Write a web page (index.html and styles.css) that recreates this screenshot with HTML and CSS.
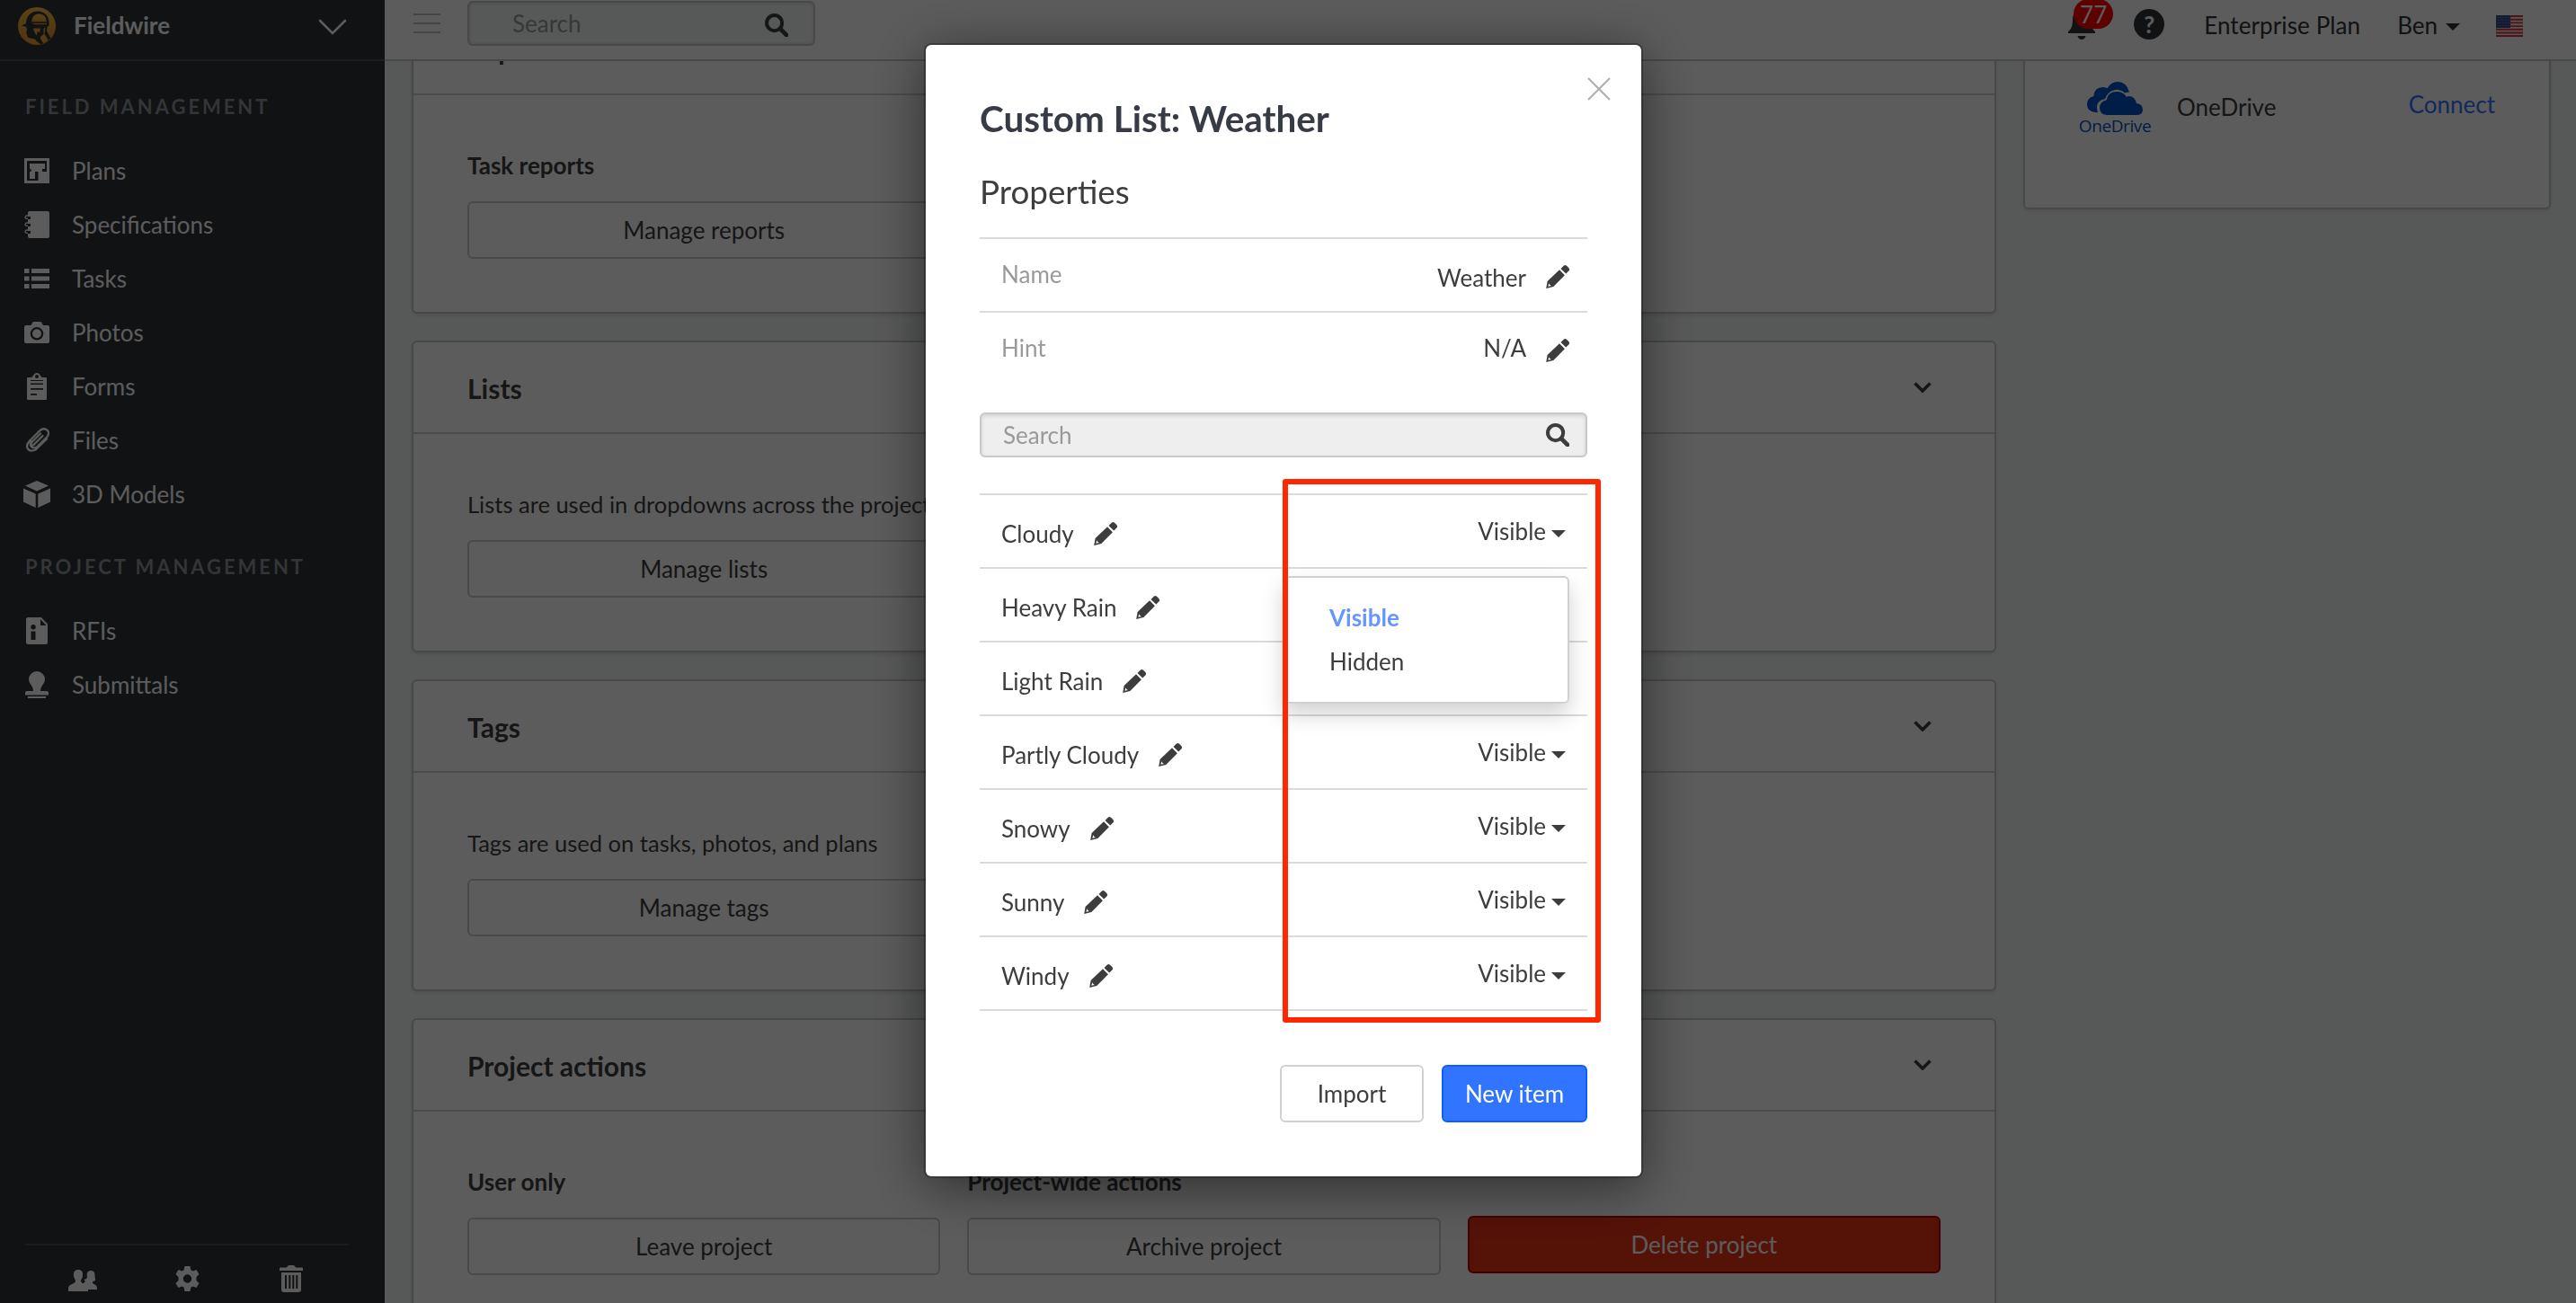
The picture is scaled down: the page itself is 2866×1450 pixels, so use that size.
FILE: index.html
```html
<!DOCTYPE html>
<html lang="en">
<head>
    <meta charset="UTF-8">
    <title>Fieldwire - Project settings</title>
    <link rel="stylesheet" href="styles.css">
</head>
<body>
    <!-- Shared icons -->
    <svg class="sprite" xmlns="http://www.w3.org/2000/svg">
        <symbol id="i-pencil" viewBox="0 0 26 26">
            <path d="M16.500 4l3.200-3.200q1.600-1.500 3.300 0l2.300 2.300q1.500 1.700 0 3.400l-3.100 3.100z"/>
            <path fill-rule="evenodd" d="M15 5.300l5.900 5.900L8.300 24 0.200 26 1.600 18zM3.200 20.300l-.8 3.400 3.500-.8-1.600-.8z"/>
        </symbol>
        <symbol id="i-search" viewBox="0 0 26 26">
            <circle cx="10.600" cy="10.600" r="8.600" fill="none" stroke="currentColor" stroke-width="4"/>
            <path d="M17 17l7 7" stroke="currentColor" stroke-width="4.600" stroke-linecap="round"/>
        </symbol>
        <symbol id="i-chevron" viewBox="0 0 20 12">
            <path d="M1.500 1.500L10 10l8.500-8.500" fill="none" stroke="currentColor" stroke-width="3.600"/>
        </symbol>
    </svg>

    <div class="app">
        <aside class="sidebar">
            <div class="brand">
                <svg class="brand-logo" viewBox="0 0 42 42">
                    <defs>
                        <linearGradient id="gold" x1="0" y1="0" x2="0" y2="1">
                            <stop offset="0" stop-color="#f3bd3c"/>
                            <stop offset="1" stop-color="#e08a2c"/>
                        </linearGradient>
                    </defs>
                    <circle cx="21" cy="21" r="21" fill="url(#gold)"/>
                    <path fill="#2f3238" d="M4 20.500L9 18C9.500 10 14 4.500 22 4.500c7 0 12.500 5 12.500 12.500v3l-2 2.500-.5 4 4.500 8-4 3-4.500-5-3 3 3 4.500-2 1.500-9-6-6.500-1.500-1.500-5 1-4-1-3z"/>
                    <path fill="url(#gold)" d="M15 16.200q.8-8.700 8.500-8.700t8.500 8.700zM15 17.700h17v1.500H19z"/>
                    <path fill="#e9a233" d="M17 23.500h8l-1 5-2.200-2-1 5-2.800-4.500zM28.500 24l2-2-1 8 4 6-4 3.500-5-6 4-3.500zM4.500 22h5l-1 5 2.500 7 8 1.800L23 41q-8 .5-14-5z"/>
                </svg>
                <span class="brand-name">Fieldwire</span>
                <svg class="brand-arrow" viewBox="0 0 32 18"><path d="M2 2l14 14L30 2" fill="none" stroke="currentColor" stroke-width="2.600" stroke-linecap="round"/></svg>
            </div>

            <h4 class="nav-title">Field management</h4>
            <ul class="nav">
                <li>
                    <svg viewBox="0 0 28 28"><path fill-rule="evenodd" d="M0 0h28v28H0zM3 3v22h12.500V15H12v8H6v-8h1.500v-3H6V6h17v6h-3v3h5V3z"/><path d="M7 7h15v4h-5v4h-4v-4H11v4h1v6H7v-6h1v-4H7z"/></svg>
                    Plans
                </li>
                <li>
                    <svg viewBox="0 0 28 30"><path d="M6 0h20q2 0 2 2v26q0 2-2 2H6q-2 0-2-2v-3h3v-3H4v-5h3v-3H4V9h3V6H4V2q0-2 2-2z"/><path d="M7 5H3q-2 .2-2 1.700T3 8.400h1M7 13H3q-2 .2-2 1.700t2 1.700h1M7 21H3q-2 .2-2 1.700t2 1.700h1" fill="none" stroke="currentColor" stroke-width="1.300"/></svg>
                    Specifications
                </li>
                <li>
                    <svg viewBox="0 0 28 22"><path d="M0 0h5.500v5H0zM8 0h20v5H8zM0 8.500h5.500v5H0zM8 8.500h20v5H8zM0 17h5.500v5H0zM8 17h20v5H8z"/></svg>
                    Tasks
                </li>
                <li>
                    <svg viewBox="0 0 28 24"><path fill-rule="evenodd" d="M2 4h5.500L9 1.200Q9.500 0 11 0h6.500q1.500 0 2 1.200L21 4h5q2 0 2 2v16q0 2-2 2H2q-2 0-2-2V6q0-2 2-2zM14 6a7.300 7.300 0 1 0 0 14.600A7.300 7.300 0 1 0 14 6z"/><circle cx="14" cy="13.300" r="5"/></svg>
                    Photos
                </li>
                <li>
                    <svg viewBox="0 0 26 30"><path fill-rule="evenodd" d="M3 5h4c2-1 2.500-5 6-5s4 4 6 5h4q1 0 1 1v23q0 1-1 1H3q-1 0-1-1V6q0-1 1-1zM13 2a2 2 0 1 0 0 4 2 2 0 1 0 0-4zM6 8v1h14V8zM6 11.500v1.500h14v-1.500zM6 17v1.800h14V17zM6 23v1.800h7V23z"/></svg>
                    Forms
                </li>
                <li>
                    <svg viewBox="0 0 28 28"><path d="M20.500 9L11.500 18q-2 2.500-3.500 1t1-3.500l9-9M15 5.500L5.500 15Q1.500 20 4 23.500t8.500 1L25 12.500M15 5.500Q20-.5 24.500 2t1 8L15 20.500q-3.500 3-6.500 1T8 15" fill="none" stroke="currentColor" stroke-width="2.300" stroke-linecap="round"/></svg>
                    Files
                </li>
                <li>
                    <svg class="icon-cube" viewBox="0 0 30 30"><path d="M15 0l13 5.500L15 11.500 2 5.500zM0 8.500l13.700 6V30L0 23.500zM30 8.500l-13.700 6V30L30 23.500z"/></svg>
                    3D Models
                </li>
            </ul>

            <h4 class="nav-title">Project management</h4>
            <ul class="nav">
                <li>
                    <svg viewBox="0 0 24 30"><path fill-rule="evenodd" d="M2 0h15l7 7.500V28q0 2-2 2H2q-2 0-2-2V2Q0 0 2 0zM16 2v7h6.500zM8 8a2.700 2.700 0 1 0 0 5.400A2.700 2.700 0 1 0 8 8zM5.500 15.500V25h5v-9.500z"/></svg>
                    RFIs
                </li>
                <li>
                    <svg viewBox="0 0 26 30"><path d="M13 0a9 9 0 0 1 9 9c0 5-5 7-5 13h7q2 0 2 2v2.500H0V24q0-2 2-2h7C9 16 4 14 4 9a9 9 0 0 1 9-9zM3 28h20v2H3z"/></svg>
                    Submittals
                </li>
            </ul>

            <div class="sidebar-footer">
                <svg class="icon-people" viewBox="0 0 32 24"><path d="M22 8c-1-5 1-7 4-7s5 2 4.500 6.500c0 2 1 3 .5 4.500l-3 1.500q-.5 2 3 3.200 2 1 2 5.300H22q0-4-5-6l3-3q-1-1-1.500-2l2.500-1z" transform="translate(-1 0)"/><path d="M11 0c4 0 5.500 2.500 5 6.500-.3 3.500-2 4-2 6.500s7.500 3 8 7v4H0v-4c.5-4 8-4.500 8-7S6.300 10 6 6.500C5.500 2.500 7 0 11 0z"/></svg>
                <svg class="icon-gear" viewBox="0 0 26 28"><path fill-rule="evenodd" d="M10 0h6l.8 4.200 2.400 1.400L23 4l3 5-3 3v4l3 3-3 5-3.800-1.600-2.400 1.400L16 28h-6l-.8-4.200-2.400-1.400L3 24l-3-5 3-3v-4L0 9l3-5 3.800 1.600 2.400-1.400zM13 9.300a4.700 4.700 0 1 0 0 9.400 4.700 4.700 0 1 0 0-9.400z"/></svg>
                <svg class="icon-trash" viewBox="0 0 26 30"><path fill-rule="evenodd" d="M1 2.500h7Q9 0 10.500 0h5Q17 0 18 2.500h7q1 0 1 1V6H0V3.500q0-1 1-1zM2 8h22v19q0 3-3 3H5q-3 0-3-3zM6 11v15h2V11zM10.300 11v15h2V11zM14.300 11v15h2V11zM18.300 11v15h2V11z"/></svg>
            </div>
        </aside>

        <div class="page">
            <header class="topbar">
                <div class="burger"><i></i><i></i><i></i></div>
                <div class="top-search">
                    <span>Search</span>
                    <svg><use href="#i-search"/></svg>
                </div>
                <div class="bell">
                    <svg viewBox="0 0 30 36"><path d="M15 0q2 0 2 2 8 2 8 12 0 10 5 13v2H0v-2q5-3 5-13Q5 4 13 2q0-2 2-2zM10.500 32h9q-1 4-4.500 4t-4.500-4z"/></svg>
                    <span class="badge">77</span>
                </div>
                <div class="help">?</div>
                <span class="plan">Enterprise Plan</span>
                <span class="user">Ben <i class="caret"></i></span>
                <svg class="flag" viewBox="0 0 30 24">
                    <rect width="30" height="24" fill="#f2eded"/>
                    <path d="M0 1h30M0 4.700h30M0 8.400h30M0 12.100h30M0 15.800h30M0 19.500h30M0 23h30" stroke="#d9353f" stroke-width="1.900"/>
                    <rect width="16" height="14" fill="#3c4a93"/>
                    <path d="M1.500 2.500h14M1.500 5.500h14M1.500 8.500h14M1.500 11.500h14" stroke="#8790c0" stroke-width="1" stroke-dasharray="1 2"/>
                </svg>
            </header>

            <div class="content">
                <main class="cards">
                    <section class="card">
                        <div class="card-head"><h3>Reports</h3></div>
                        <div class="card-body">
                            <div class="col">
                                <label>Task reports</label>
                                <button class="btn">Manage reports</button>
                            </div>
                        </div>
                    </section>
                    <section class="card">
                        <div class="card-head"><h3>Lists</h3><svg><use href="#i-chevron"/></svg></div>
                        <div class="card-body">
                            <div class="col">
                                <p>Lists are used in dropdowns across the project</p>
                                <button class="btn">Manage lists</button>
                            </div>
                        </div>
                    </section>
                    <section class="card">
                        <div class="card-head"><h3>Tags</h3><svg><use href="#i-chevron"/></svg></div>
                        <div class="card-body">
                            <div class="col">
                                <p>Tags are used on tasks, photos, and plans</p>
                                <button class="btn">Manage tags</button>
                            </div>
                        </div>
                    </section>
                    <section class="card">
                        <div class="card-head"><h3>Project actions</h3><svg><use href="#i-chevron"/></svg></div>
                        <div class="card-body">
                            <div class="col">
                                <label>User only</label>
                                <button class="btn">Leave project</button>
                            </div>
                            <div class="col">
                                <label>Project-wide actions</label>
                                <button class="btn">Archive project</button>
                            </div>
                            <div class="col col-danger">
                                <button class="btn btn-danger">Delete project</button>
                            </div>
                        </div>
                    </section>
                </main>

                <aside class="integrations">
                    <div class="integration">
                        <div class="onedrive">
                            <svg viewBox="0 0 62 37">
                                <path d="M12 34H9Q0 33 0 25q0-7 7.500-9Q8 6 17.500 6q3 0 5 1.200Q27 0 34 0q10 0 13 11.500-3 0-5 1Q37 8 31 9q-8 1.500-11 10-9 2-9 9 0 3.500 1 6z"/>
                                <path d="M22 37q-8-.5-8-8 0-7 7.500-8.500Q23 11 33 11q7.500 0 10.500 5.500 9-2.500 11.500 7.500 7 1 7 7 0 5.500-6 6z"/>
                            </svg>
                            <span>OneDrive</span>
                        </div>
                        <span class="integration-name">OneDrive</span>
                        <a class="connect">Connect</a>
                    </div>
                </aside>
            </div>
        </div>
    </div>

    <div class="overlay">
        <div class="modal">
            <svg class="close" viewBox="0 0 26 26"><path d="M1 1l24 24M25 1L1 25" stroke="currentColor" stroke-width="2.200"/></svg>
            <h1>Custom List: Weather</h1>
            <h2>Properties</h2>
            <div class="props">
                <div class="prop">
                    <span class="prop-name">Name</span>
                    <span class="prop-value drop">Weather</span>
                    <svg class="pencil"><use href="#i-pencil"/></svg>
                </div>
                <div class="prop">
                    <span class="prop-name">Hint</span>
                    <span class="prop-value">N/A</span>
                    <svg class="pencil"><use href="#i-pencil"/></svg>
                </div>
            </div>
            <div class="list-search">
                <span>Search</span>
                <svg><use href="#i-search"/></svg>
            </div>
            <ul class="items">
                <li><span>Cloudy</span><svg class="pencil"><use href="#i-pencil"/></svg><b>Visible<i class="caret"></i></b></li>
                <li><span>Heavy Rain</span><svg class="pencil"><use href="#i-pencil"/></svg></li>
                <li><span>Light Rain</span><svg class="pencil"><use href="#i-pencil"/></svg></li>
                <li><span>Partly Cloudy</span><svg class="pencil"><use href="#i-pencil"/></svg><b>Visible<i class="caret"></i></b></li>
                <li><span>Snowy</span><svg class="pencil"><use href="#i-pencil"/></svg><b>Visible<i class="caret"></i></b></li>
                <li><span>Sunny</span><svg class="pencil"><use href="#i-pencil"/></svg><b>Visible<i class="caret"></i></b></li>
                <li><span>Windy</span><svg class="pencil"><use href="#i-pencil"/></svg><b>Visible<i class="caret"></i></b></li>
            </ul>
            <div class="actions">
                <button class="btn">Import</button>
                <button class="btn btn-primary">New item</button>
            </div>

            <div class="dropdown">
                <div class="selected">Visible</div>
                <div>Hidden</div>
            </div>
            <div class="highlight"></div>
        </div>
    </div>
</body>
</html>
```

FILE: styles.css
```css
* {
    box-sizing: border-box;
}
body {
    margin: 0;
    height: 1450px;
    overflow: hidden;
    font-family: Lato, "Open Sans", sans-serif;
    font-size: 26px;
    color: #3d3d3d;
    background: #f2f6f4;
}
h1, h2, h3, h4, p, ul {
    margin: 0;
    padding: 0;
    font-weight: normal;
}
ul {
    list-style: none;
}
svg {
    fill: currentColor;
    flex: none;
}
.sprite {
    display: none;
}
.app {
    display: flex;
    height: 1450px;
}

/* Sidebar */
.sidebar {
    width: 428px;
    flex: none;
    display: flex;
    flex-direction: column;
    background: #2f3238;
    color: #fff;
}
.brand {
    display: flex;
    align-items: center;
    height: 68px;
    padding: 0 42px 10px 20px;
    border-bottom: 2px solid #52555b;
}
.brand-logo {
    width: 42px;
    height: 42px;
    margin-top: 2px;
}
.brand-name {
    margin-left: 20px;
    margin-bottom: 1px;
    font-weight: bold;
}
.brand-arrow {
    width: 32px;
    height: 18px;
    margin-left: auto;
    margin-top: 4px;
}
.nav-title {
    height: 92px;
    padding: 9px 0 0 28px;
    line-height: 83px;
    font-size: 22px;
    font-weight: bold;
    letter-spacing: 2.95px;
    text-transform: uppercase;
    color: #909399;
}
.nav li {
    display: flex;
    align-items: center;
    height: 60px;
    padding-left: 27px;
}
.nav svg {
    width: 28px;
    height: 30px;
    margin-right: 25px;
}
.nav .icon-cube {
    width: 30px;
    margin: 0 24px 0 -1px;
}
.sidebar-footer {
    display: flex;
    align-items: center;
    gap: 87px;
    height: 66px;
    margin: auto 40px 0 28px;
    padding: 10px 0 0 48px;
    border-top: 2px solid #4c4f55;
}
.icon-people {
    width: 32px;
    height: 24px;
    margin-top: 4px;
}
.icon-gear {
    width: 27px;
    height: 28px;
}
.icon-trash {
    width: 26px;
    height: 30px;
    margin-left: 2px;
}

/* Top bar */
.page {
    flex: 1;
    min-width: 0;
}
.topbar {
    position: relative;
    z-index: 1;
    display: flex;
    align-items: center;
    height: 68px;
    padding: 0 59px 14px 32px;
    background: #fff;
    border-bottom: 2px solid #c8c8c8;
    color: #2f3238;
}
.burger {
    display: flex;
    flex-direction: column;
    gap: 8px;
    width: 30px;
    margin-right: 30px;
}
.burger i {
    height: 2px;
    background: #c0c0c0;
}
.top-search {
    display: flex;
    align-items: center;
    justify-content: space-between;
    width: 387px;
    height: 50px;
    padding: 0 28px 0 48px;
    border: 2px solid #c8c8c8;
    border-radius: 6px;
    background: #f2f6f4;
    box-shadow: inset 0 0 4px #ccc;
    color: #999;
}
.top-search svg {
    width: 26px;
    height: 26px;
    margin-top: 4px;
    color: #3d3d3d;
}
.bell {
    position: relative;
    width: 30px;
    height: 36px;
    margin-left: auto;
    margin-right: 43px;
}
.bell svg {
    display: block;
    width: 30px;
    height: 36px;
}
.badge {
    position: absolute;
    left: 6px;
    top: -9px;
    width: 44px;
    height: 33px;
    border-radius: 17px;
    background: #ff0000;
    color: #fff;
    line-height: 35px;
    text-align: center;
}
.help {
    width: 34px;
    height: 34px;
    margin-top: 2px;
    margin-right: 44px;
    border-radius: 50%;
    background: #2f3238;
    color: #fff;
    font-weight: bold;
    line-height: 34px;
    text-align: center;
}
.plan {
    margin-top: 4px;
    margin-right: 41px;
    letter-spacing: 0.1px;
}
.user {
    display: flex;
    align-items: center;
    gap: 9px;
    margin-top: 4px;
    margin-right: 40px;
}
.user .caret {
    margin-top: 4px;
}
.caret {
    display: inline-block;
    border: 8px solid transparent;
    border-top-color: currentColor;
    border-bottom: 0;
}
.flag {
    width: 30px;
    height: 24px;
    margin-top: 5px;
}

/* Settings cards, scrolled up under the top bar */
.content {
    display: flex;
    align-items: flex-start;
    gap: 30px;
    margin: -66px 28px 0 30px;
}
.cards {
    flex: 1;
}
.card {
    height: 347px;
    margin-bottom: 30px;
    border: 2px solid #c8c8c8;
    border-radius: 6px;
    background: #fff;
    box-shadow: 0 2px 4px rgba(0, 0, 0, 0.1);
}
.card-head {
    display: flex;
    align-items: center;
    justify-content: space-between;
    height: 102px;
    padding: 2px 70px 0 60px;
    border-bottom: 2px solid #d0d0d0;
}
.card-head h3 {
    font-size: 30px;
    font-weight: bold;
}
.card-head svg {
    width: 20px;
    height: 12px;
    margin-bottom: 3px;
}
.card-body {
    display: grid;
    grid-template-columns: repeat(3, 1fr);
    gap: 30px;
    padding: 59px 60px 0;
}
.col label, .col p {
    display: block;
    height: 59px;
    line-height: 38px;
    white-space: nowrap;
}
.col label {
    font-weight: bold;
}
.col p {
    font-size: 25.5px;
}
.col-danger {
    padding-top: 57px;
}
.btn {
    width: 100%;
    height: 64px;
    padding: 0 0 1px;
    border: 2px solid #cacaca;
    border-radius: 6px;
    background: #fff;
    font: inherit;
    color: #3d3d3d;
}
.btn-danger {
    background: #ea3216;
    border-color: #b80000;
    color: #fff;
}
.integrations {
    width: 587px;
    height: 231px;
    border: 2px solid #c8c8c8;
    border-radius: 6px;
    background: #fff;
    box-shadow: 0 2px 4px rgba(0, 0, 0, 0.1);
}
.integration {
    display: flex;
    align-items: center;
    height: 70px;
    margin-top: 82px;
    padding: 0 60px;
}
.onedrive {
    display: flex;
    flex-direction: column;
    align-items: center;
    width: 80px;
    color: #0052c6;
    font-family: "Open Sans", sans-serif;
    font-size: 19px;
    letter-spacing: -0.4px;
    line-height: 24px;
}
.onedrive svg {
    width: 62px;
    height: 37px;
}
.integration-name {
    margin-left: 29px;
    margin-bottom: 4px;
}
.connect {
    margin-left: auto;
    margin-bottom: 10px;
    color: #2f74ff;
}

/* Modal */
.overlay {
    position: fixed;
    inset: 0;
    z-index: 2;
    padding-top: 48px;
    background: rgba(0, 0, 0, 0.64);
}
.modal {
    position: relative;
    width: 800px;
    height: 1263px;
    margin-left: 1028px;
    padding: 0 60px;
    border: 2px solid rgba(0, 0, 0, 0.3);
    border-radius: 8px;
    background: #fff;
    background-clip: padding-box;
    box-shadow: 0 10px 60px rgba(0, 0, 0, 0.5);
}
.close {
    position: absolute;
    top: 36px;
    right: 34px;
    width: 26px;
    height: 26px;
    color: #b0b0b0;
}
.modal h1 {
    padding-top: 58px;
    font-size: 40.4px;
    line-height: 48px;
    font-weight: bold;
    color: #363b45;
}
.modal h2 {
    padding: 36px 0 30px;
    font-size: 36.8px;
    line-height: 42px;
}
.prop {
    display: flex;
    align-items: center;
    height: 82px;
    padding: 4px 20px 0 24px;
    border-top: 2px solid #dadada;
}
.prop-name {
    margin-right: auto;
    margin-bottom: 6px;
    color: #999;
}
.prop-value {
    margin-right: 22px;
    margin-bottom: 6px;
}
.prop-value.drop {
    margin-bottom: 0;
    margin-top: 2px;
}
.pencil {
    width: 26px;
    height: 26px;
}
.list-search {
    display: flex;
    align-items: center;
    justify-content: space-between;
    height: 50px;
    margin: 31px 0 40px;
    padding: 0 18px 0 24px;
    border: 2px solid #c8c8c8;
    border-radius: 6px;
    background: #eee;
    box-shadow: inset 0 2px 4px rgba(0, 0, 0, 0.12);
    color: #999;
}
.list-search svg {
    width: 26px;
    height: 26px;
    color: #3d3d3d;
}
.items {
    border-bottom: 2px solid #dadada;
}
.items li {
    display: flex;
    align-items: center;
    height: 82px;
    padding: 6px 24px 0;
    border-top: 2px solid #dadada;
}
.items .pencil {
    margin: 0 0 1px 22px;
}
.items b {
    display: flex;
    align-items: center;
    gap: 6px;
    margin-left: auto;
    margin-bottom: 6px;
    font-weight: normal;
}
.items .caret {
    margin-top: 5px;
}
.actions {
    display: flex;
    justify-content: flex-end;
    gap: 20px;
    margin-top: 60px;
}
.actions .btn {
    width: 160px;
    border-color: #cfcfd4;
}
.actions .btn-primary {
    width: 162px;
    background: #3074ff;
    border-color: #0f5cff;
    color: #fff;
}
.dropdown {
    position: absolute;
    top: 591px;
    left: 397px;
    width: 319px;
    height: 142px;
    padding: 20px 50px;
    border: 2px solid #d0d0d0;
    border-radius: 6px;
    background: #fff;
    box-shadow: 0 12px 24px rgba(0, 0, 0, 0.18);
    line-height: 49px;
}
.dropdown .selected {
    font-weight: bold;
    color: #6496ff;
}
.highlight {
    position: absolute;
    top: 483px;
    left: 397px;
    width: 354px;
    height: 605px;
    border: 6px solid #ff2600;
    border-radius: 3px;
}
```
